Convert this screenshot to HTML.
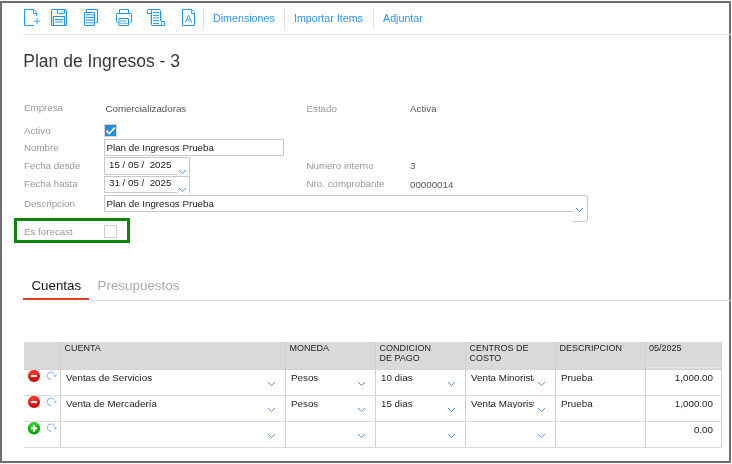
<!DOCTYPE html>
<html><head><meta charset="utf-8"><style>
html,body{margin:0;padding:0;}
body{width:732px;height:464px;position:relative;overflow:hidden;background:#fff;font-family:"Liberation Sans", sans-serif;}
.t{position:absolute;line-height:1;white-space:nowrap;}
</style></head><body>
<div id="wrap" style="position:absolute;left:0;top:0;width:732px;height:464px;will-change:transform;background:#fff">
<div style="position:absolute;left:0px;top:1px;width:731px;height:462px;border:2px solid #6f6f6f;box-sizing:border-box"></div>
<div style="position:absolute;left:23px;top:34px;width:709px;height:1px;background:#e6e6e6"></div>
<svg style="position:absolute;left:0;top:0" width="732" height="40" viewBox="0 0 732 40">
<g fill="none" stroke="#2196f3" stroke-width="1">
 <!-- new doc -->
 <path d="M34 25.5H24.5V9.5H33.8L36.8 12.6V16"/>
 <path d="M33.5 10V13.5H36.5" opacity="0.9"/>
 <path d="M34 21.3H40M37 18V24" stroke-width="1.3" opacity="0.65"/>
 <!-- save -->
 <path d="M51.5 9.5H65.8L66.5 10.5V25.5H51.5Z"/>
 <path d="M57.5 10V12.8Q57.5 13.5 58.2 13.5H63.8Q64.5 13.5 64.5 12.8V10"/>
 <path d="M60.5 11.5H64" stroke-width="1.4" opacity="0.35"/>
 <path d="M53.5 25V16.5H64.5V25"/>
 <path d="M55 19.5H63"/>
 <path d="M55 21.8H63" stroke-width="2.6" opacity="0.45"/>
 <path d="M52.5 17V25M65.5 12V25" stroke-width="1" opacity="0.25"/>
 <!-- copy -->
 <path d="M86.5 12V9.5H97.5V22.5H95.5"/>
 <path d="M84.5 12.5H94.5V25.5H84.5Z"/>
 <path d="M86 14.7H94M86 20.1H94M86 22.6H94" stroke-width="1.6" opacity="0.6"/>
 <path d="M86 17.4H94" stroke-width="1.1"/>
 <!-- printer -->
 <path d="M119.5 13.5V9.5H128.5V13.5"/>
 <path d="M118.5 22.5H117.3Q116.5 22.5 116.5 21.7V14.3Q116.5 13.5 117.3 13.5H130.7Q131.5 13.5 131.5 14.3V21.7Q131.5 22.5 130.7 22.5H129.5"/>
 <path d="M119 25.5V18.5H128.5V25.5Z"/>
 <path d="M120 21.2H126.5" stroke-width="2.4" opacity="0.45"/>
 <path d="M120 23.5H128" stroke-width="1" opacity="0.55"/>
 <path d="M129.5 15.2V16.4" stroke-width="0.9" opacity="0.5"/>
 <!-- scroll -->
 <path d="M150.5 13.5H147.5V10.3Q147.5 9.5 148.3 9.5H159.3Q160.5 9.5 160.5 10.7V21"/>
 <path d="M151.5 10.2V24.3Q151.5 25.5 152.7 25.5H164.5V21.5H161"/>
 <path d="M150.5 12V23.5M161.5 12V21" opacity="0.3"/>
 <path d="M161.3 21.5V25" opacity="0.8"/>
 <path d="M153 12.5H159M153 15.3H159M153 20.6H159M153 23.4H159"/>
 <path d="M153 18H159" stroke-width="1.6" opacity="0.6"/>
 <!-- doc A -->
 <path d="M191.5 9.5H182.5V25.5H194.5V12.6Z"/>
 <path d="M191.5 10V13.5H194" opacity="0.9"/>
 <path d="M185.3 22.6L188.5 15.4L191.7 22.6M186.9 20.1H190.1" stroke-width="0.95"/>
</g>
</svg>
<div style="position:absolute;left:203px;top:8px;width:1px;height:22px;background:#e3e3e3"></div>
<div style="position:absolute;left:284px;top:8px;width:1px;height:22px;background:#e3e3e3"></div>
<div style="position:absolute;left:373px;top:8px;width:1px;height:22px;background:#e3e3e3"></div>
<div class="t" style="left:213px;top:12.64px;font-size:10.7px;color:#2f94ee;">Dimensiones</div>
<div class="t" style="left:294px;top:12.64px;font-size:10.7px;color:#2f94ee;">Importar Items</div>
<div class="t" style="left:383px;top:12.64px;font-size:10.7px;color:#2f94ee;">Adjuntar</div>
<div class="t" style="left:23.3px;top:53.09px;font-size:17.5px;color:#383838;">Plan de Ingresos - 3</div>
<div class="t" style="left:24px;top:103.45px;font-size:9.75px;color:#999;">Empresa</div>
<div class="t" style="left:105.5px;top:103.85px;font-size:9.75px;color:#555;">Comercializadoras</div>
<div class="t" style="left:306.5px;top:103.55px;font-size:9.75px;color:#999;">Estado</div>
<div class="t" style="left:410px;top:104.45px;font-size:9.75px;color:#555;">Activa</div>
<div class="t" style="left:24px;top:125.65px;font-size:9.75px;color:#999;">Activo</div>
<div style="position:absolute;left:104px;top:124px;width:13px;height:13px;background:#2090d8;border:1px solid #d9d4d2;box-sizing:border-box"></div>
<svg style="position:absolute;left:104px;top:124px" width="13" height="13"><path d="M2.3 6.6L5.3 9.6L10.8 3.6" fill="none" stroke="#fff" stroke-width="1.6"/></svg>
<div class="t" style="left:24px;top:142.75px;font-size:9.75px;color:#999;">Nombre</div>
<div style="position:absolute;left:104px;top:139px;width:180px;height:17px;border:1px solid #c8c8c8;box-sizing:border-box"></div>
<div class="t" style="left:106.5px;top:142.75px;font-size:9.75px;color:#222;">Plan de Ingresos Prueba</div>
<div class="t" style="left:24px;top:160.65px;font-size:9.75px;color:#999;">Fecha desde</div>
<div class="t" style="left:306.5px;top:161.25px;font-size:9.75px;color:#999;">Numero interno</div>
<div class="t" style="left:410px;top:161.25px;font-size:9.75px;color:#555;">3</div>
<div class="t" style="left:24px;top:178.95px;font-size:9.75px;color:#999;">Fecha hasta</div>
<div class="t" style="left:306.5px;top:178.95px;font-size:9.75px;color:#999;">Nro. comprobante</div>
<div class="t" style="left:410px;top:179.75px;font-size:9.75px;color:#555;">00000014</div>
<div style="position:absolute;left:104px;top:157px;width:86px;height:18px;border-top:1px solid #c8c8c8;border-left:1px solid #c8c8c8;border-right:1px solid #c8c8c8;box-sizing:border-box"></div>
<div style="position:absolute;left:104px;top:174px;width:73px;height:1px;background:#c8c8c8"></div>
<div class="t" style="left:109px;top:159.55px;font-size:9.75px;color:#222;white-space:pre">15 / 05 /  2025</div>
<svg style="position:absolute;left:178px;top:169px" width="10" height="6"><path d="M1 1L4.5 4.6L8 1" fill="none" stroke="#4a92dc" stroke-width="0.95"/></svg>
<div style="position:absolute;left:104px;top:176px;width:86px;height:17px;border-top:1px solid #c8c8c8;border-left:1px solid #c8c8c8;border-right:1px solid #c8c8c8;box-sizing:border-box"></div>
<div style="position:absolute;left:104px;top:192px;width:73px;height:1px;background:#c8c8c8"></div>
<div class="t" style="left:109px;top:177.75px;font-size:9.75px;color:#222;white-space:pre">31 / 05 /  2025</div>
<svg style="position:absolute;left:178px;top:187px" width="10" height="6"><path d="M1 1L4.5 4.6L8 1" fill="none" stroke="#4a92dc" stroke-width="0.95"/></svg>
<div class="t" style="left:24px;top:199.25px;font-size:9.75px;color:#999;">Descripcion</div>
<div style="position:absolute;left:104px;top:195px;width:484px;height:17px;border-top:1px solid #c8c8c8;border-left:1px solid #c8c8c8;border-bottom:1px solid #c8c8c8;box-sizing:border-box;width:470px"></div>
<div style="position:absolute;left:573px;top:195px;width:15px;height:27px;border-top:1px solid #c8c8c8;border-right:1px solid #c8c8c8;border-bottom:1px solid #c8c8c8;box-sizing:border-box;border-radius:0 3px 3px 0"></div>
<div class="t" style="left:106.5px;top:199.25px;font-size:9.75px;color:#222;">Plan de Ingresos Prueba</div>
<svg style="position:absolute;left:575px;top:207px" width="10" height="6"><path d="M1 1L4.5 4.6L8 1" fill="none" stroke="#4a92dc" stroke-width="0.95"/></svg>
<div style="position:absolute;left:14.4px;top:218.4px;width:115.3px;height:24.9px;border:3.2px solid #0a870a;box-sizing:border-box"></div>
<div class="t" style="left:24px;top:226.75px;font-size:9.75px;color:#999;">Es forecast</div>
<div style="position:absolute;left:104px;top:225px;width:13px;height:13px;border:1px solid #d0d0d0;box-sizing:border-box;background:#fff"></div>
<div class="t" style="left:31.5px;top:278.84px;font-size:13.3px;color:#111;">Cuentas</div>
<div class="t" style="left:97.5px;top:278.76px;font-size:13.4px;color:#aaa;">Presupuestos</div>
<div style="position:absolute;left:89px;top:300px;width:643px;height:1px;background:#dcdcdc"></div>
<div style="position:absolute;left:23px;top:298px;width:66px;height:2px;background:#e43b22"></div>

<div style="position:absolute;left:24px;top:342px;width:698px;height:28px;background:#dadada"></div>
<div style="position:absolute;left:24px;top:369px;width:698px;height:1px;background:#d4d4d4"></div>
<div style="position:absolute;left:60px;top:342px;width:1px;height:105px;background:#d0d0d0"></div>
<div style="position:absolute;left:285px;top:342px;width:1px;height:105px;background:#d0d0d0"></div>
<div style="position:absolute;left:375px;top:342px;width:1px;height:105px;background:#d0d0d0"></div>
<div style="position:absolute;left:465px;top:342px;width:1px;height:105px;background:#d0d0d0"></div>
<div style="position:absolute;left:555px;top:342px;width:1px;height:105px;background:#d0d0d0"></div>
<div style="position:absolute;left:645px;top:342px;width:1px;height:105px;background:#d0d0d0"></div>
<div style="position:absolute;left:24px;top:395px;width:698px;height:1px;background:#d9d9d9"></div>
<div style="position:absolute;left:24px;top:421px;width:698px;height:1px;background:#d9d9d9"></div>
<div style="position:absolute;left:24px;top:447px;width:698px;height:1px;background:#d9d9d9"></div>
<div style="position:absolute;left:721px;top:342px;width:1px;height:105px;background:#d0d0d0"></div>
<div style="position:absolute;left:646px;top:367px;width:75px;height:1px;background:#e6e6e6"></div>
<div class="t" style="left:64.5px;top:343.78px;font-size:9px;color:#222;">CUENTA</div>
<div class="t" style="left:289.5px;top:343.78px;font-size:9px;color:#222;">MONEDA</div>
<div class="t" style="left:379.5px;top:343.78px;font-size:9px;color:#222;">CONDICION</div>
<div class="t" style="left:379.5px;top:353.98px;font-size:9px;color:#222;">DE PAGO</div>
<div class="t" style="left:469.5px;top:343.78px;font-size:9px;color:#222;">CENTROS DE</div>
<div class="t" style="left:469.5px;top:353.98px;font-size:9px;color:#222;">COSTO</div>
<div class="t" style="left:559.5px;top:343.78px;font-size:9px;color:#222;">DESCRIPCION</div>
<div class="t" style="left:649px;top:343.78px;font-size:9px;color:#222;">05/2025</div>
<div class="t" style="left:66px;top:372.70px;font-size:9.8px;color:#222;">Ventas de Servicios</div>
<div class="t" style="left:291px;top:372.70px;font-size:9.8px;color:#222;">Pesos</div>
<div class="t" style="left:381px;top:372.70px;font-size:9.8px;color:#222;">10 dias</div>
<div class="t" style="left:471px;top:372.70px;font-size:9.8px;color:#222;width:62.5px;overflow:hidden;white-space:nowrap">Venta Minorista</div>
<div class="t" style="left:561px;top:372.70px;font-size:9.8px;color:#222;">Prueba</div>
<div class="t" style="left:646px;top:372.70px;font-size:9.8px;color:#222;width:67px;text-align:right">1,000.00</div>
<svg style="position:absolute;left:267px;top:381px" width="10" height="6"><path d="M1 1L4.5 4.6L8 1" fill="none" stroke="#4a92dc" stroke-width="0.95"/></svg>
<svg style="position:absolute;left:357px;top:381px" width="10" height="6"><path d="M1 1L4.5 4.6L8 1" fill="none" stroke="#4a92dc" stroke-width="0.95"/></svg>
<svg style="position:absolute;left:447px;top:381px" width="10" height="6"><path d="M1 1L4.5 4.6L8 1" fill="none" stroke="#4a92dc" stroke-width="0.95"/></svg>
<svg style="position:absolute;left:537px;top:381px" width="10" height="6"><path d="M1 1L4.5 4.6L8 1" fill="none" stroke="#4a92dc" stroke-width="0.95"/></svg>
<svg style="position:absolute;left:27px;top:370px" width="14" height="14"><defs><radialGradient id="rg369" cx="0.45" cy="0.25" r="0.8"><stop offset="0" stop-color="#ff4030"/><stop offset="1" stop-color="#c40000"/></radialGradient></defs><circle cx="7" cy="5.9" r="6" fill="url(#rg369)"/><rect x="3.7" y="5.05" width="6.3" height="1.85" fill="#fff"/></svg>
<svg style="position:absolute;left:44px;top:369px" width="16" height="14"><path d="M7.2 10.4A3.7 3.7 0 1 1 10.6 5.4" fill="none" stroke="#98c0f4" stroke-width="1.1"/><path d="M9.8 6.6L12.9 6.3L11.2 8.3Z" fill="#98c0f4" stroke="#98c0f4" stroke-width="0.6"/></svg>
<div class="t" style="left:66px;top:398.70px;font-size:9.8px;color:#222;">Venta de Mercadería</div>
<div class="t" style="left:291px;top:398.70px;font-size:9.8px;color:#222;">Pesos</div>
<div class="t" style="left:381px;top:398.70px;font-size:9.8px;color:#222;">15 dias</div>
<div class="t" style="left:471px;top:398.70px;font-size:9.8px;color:#222;width:62.5px;overflow:hidden;white-space:nowrap">Venta Mayorista</div>
<div class="t" style="left:561px;top:398.70px;font-size:9.8px;color:#222;">Prueba</div>
<div class="t" style="left:646px;top:398.70px;font-size:9.8px;color:#222;width:67px;text-align:right">1,000.00</div>
<svg style="position:absolute;left:267px;top:407px" width="10" height="6"><path d="M1 1L4.5 4.6L8 1" fill="none" stroke="#4a92dc" stroke-width="0.95"/></svg>
<svg style="position:absolute;left:357px;top:407px" width="10" height="6"><path d="M1 1L4.5 4.6L8 1" fill="none" stroke="#4a92dc" stroke-width="0.95"/></svg>
<svg style="position:absolute;left:447px;top:407px" width="10" height="6"><path d="M1 1L4.5 4.6L8 1" fill="none" stroke="#4a92dc" stroke-width="0.95"/></svg>
<svg style="position:absolute;left:537px;top:407px" width="10" height="6"><path d="M1 1L4.5 4.6L8 1" fill="none" stroke="#4a92dc" stroke-width="0.95"/></svg>
<svg style="position:absolute;left:27px;top:396px" width="14" height="14"><defs><radialGradient id="rg395" cx="0.45" cy="0.25" r="0.8"><stop offset="0" stop-color="#ff4030"/><stop offset="1" stop-color="#c40000"/></radialGradient></defs><circle cx="7" cy="5.9" r="6" fill="url(#rg395)"/><rect x="3.7" y="5.05" width="6.3" height="1.85" fill="#fff"/></svg>
<svg style="position:absolute;left:44px;top:395px" width="16" height="14"><path d="M7.2 10.4A3.7 3.7 0 1 1 10.6 5.4" fill="none" stroke="#98c0f4" stroke-width="1.1"/><path d="M9.8 6.6L12.9 6.3L11.2 8.3Z" fill="#98c0f4" stroke="#98c0f4" stroke-width="0.6"/></svg>
<div class="t" style="left:66px;top:424.70px;font-size:9.8px;color:#222;"></div>
<div class="t" style="left:291px;top:424.70px;font-size:9.8px;color:#222;"></div>
<div class="t" style="left:381px;top:424.70px;font-size:9.8px;color:#222;"></div>
<div class="t" style="left:471px;top:424.70px;font-size:9.8px;color:#222;width:62.5px;overflow:hidden;white-space:nowrap"></div>
<div class="t" style="left:561px;top:424.70px;font-size:9.8px;color:#222;"></div>
<div class="t" style="left:646px;top:424.70px;font-size:9.8px;color:#222;width:67px;text-align:right">0.00</div>
<svg style="position:absolute;left:267px;top:433px" width="10" height="6"><path d="M1 1L4.5 4.6L8 1" fill="none" stroke="#4a92dc" stroke-width="0.95"/></svg>
<svg style="position:absolute;left:357px;top:433px" width="10" height="6"><path d="M1 1L4.5 4.6L8 1" fill="none" stroke="#4a92dc" stroke-width="0.95"/></svg>
<svg style="position:absolute;left:447px;top:433px" width="10" height="6"><path d="M1 1L4.5 4.6L8 1" fill="none" stroke="#4a92dc" stroke-width="0.95"/></svg>
<svg style="position:absolute;left:537px;top:433px" width="10" height="6"><path d="M1 1L4.5 4.6L8 1" fill="none" stroke="#4a92dc" stroke-width="0.95"/></svg>
<svg style="position:absolute;left:27px;top:422px" width="14" height="14"><defs><radialGradient id="rg421" cx="0.45" cy="0.25" r="0.8"><stop offset="0" stop-color="#30dd30"/><stop offset="1" stop-color="#009a00"/></radialGradient></defs><circle cx="7" cy="6.3" r="6.2" fill="url(#rg421)"/><rect x="3.9" y="5.4" width="6.1" height="2" fill="#fff"/><rect x="5.95" y="2.9" width="2.1" height="6.9" fill="#fff"/></svg>
<svg style="position:absolute;left:44px;top:421px" width="16" height="14"><path d="M7.2 10.4A3.7 3.7 0 1 1 10.6 5.4" fill="none" stroke="#98c0f4" stroke-width="1.1"/><path d="M9.8 6.6L12.9 6.3L11.2 8.3Z" fill="#98c0f4" stroke="#98c0f4" stroke-width="0.6"/></svg>
</div>
</body></html>
